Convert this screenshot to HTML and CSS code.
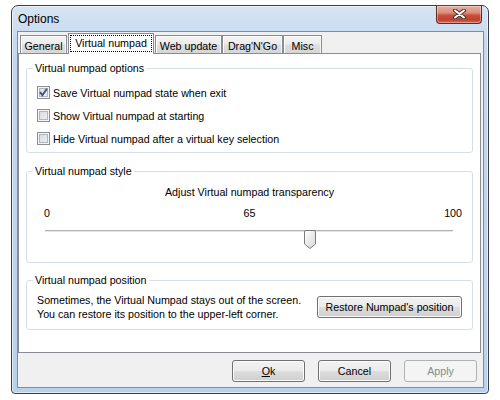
FILE: index.html
```html
<!DOCTYPE html>
<html>
<head>
<meta charset="utf-8">
<link rel="stylesheet" href="styles.css">
</head>
<body>
<div class="window">
  <div class="titlebar">
    <span class="title">Options</span>
    <div class="close">
      <svg width="13" height="10" viewBox="0 0 13 10">
        <path d="M2 1.5 L11 8.5 M11 1.5 L2 8.5" stroke="#3b3b3b" stroke-width="4" stroke-linecap="round"/>
        <path d="M2 1.5 L11 8.5 M11 1.5 L2 8.5" stroke="#ffffff" stroke-width="2" stroke-linecap="round"/>
      </svg>
    </div>
  </div>
  <div class="client">
    <div class="tabs">
      <div class="tab t-general">General</div>
      <div class="tab tab-active t-vn"><span class="focus">Virtual numpad</span></div>
      <div class="tab t-web">Web update</div>
      <div class="tab t-drag">Drag'N'Go</div>
      <div class="tab t-misc">Misc</div>
    </div>
    <div class="page">
      <fieldset class="group g-options">
        <legend>Virtual numpad options</legend>
        <div class="check-row">
          <span class="cb checked">
            <svg width="9" height="9" viewBox="0 0 9 9"><path d="M1 4.2 L3.4 7.2 L8 0.8" fill="none" stroke="#3d5291" stroke-width="1.9"/></svg>
          </span>
          <span>Save Virtual numpad state when exit</span>
        </div>
        <div class="check-row">
          <span class="cb"></span>
          <span>Show Virtual numpad at starting</span>
        </div>
        <div class="check-row">
          <span class="cb"></span>
          <span>Hide Virtual numpad after a virtual key selection</span>
        </div>
      </fieldset>
      <fieldset class="group g-style">
        <legend>Virtual numpad style</legend>
        <div class="slider-title">Adjust Virtual numpad transparency</div>
        <div class="scale">
          <span class="s-min">0</span>
          <span class="s-val">65</span>
          <span class="s-max">100</span>
        </div>
        <div class="slider">
          <div class="track"></div>
          <div class="thumb" style="left: calc(65% - 6px);">
            <svg width="12" height="19" viewBox="0 0 12 19">
              <defs>
                <linearGradient id="tg" x1="0" y1="0" x2="1" y2="1">
                  <stop offset="0" stop-color="#ffffff"/>
                  <stop offset="1" stop-color="#d6d6d6"/>
                </linearGradient>
              </defs>
              <path d="M2 0.5 H10 Q11.5 0.5 11.5 2 V14 L6 18.5 L0.5 14 V2 Q0.5 0.5 2 0.5 Z" fill="url(#tg)" stroke="#7c7c7c"/>
            </svg>
          </div>
        </div>
      </fieldset>
      <fieldset class="group g-pos">
        <legend>Virtual numpad position</legend>
        <div class="pos-row">
          <div class="pos-text">Sometimes, the Virtual Numpad stays out of the screen.<br>You can restore its position to the upper-left corner.</div>
          <button class="btn btn-restore">Restore Numpad's position</button>
        </div>
      </fieldset>
    </div>
    <div class="buttons">
      <button class="btn"><u>O</u>k</button>
      <button class="btn">Cancel</button>
      <button class="btn btn-disabled">Apply</button>
    </div>
  </div>
</div>
</body>
</html>
```
FILE: styles.css
```css
* { box-sizing: border-box; }

body {
  margin: 0;
  background: #ffffff;
  font-family: "Liberation Sans", Arial, sans-serif;
  font-size: 10.7px;
  color: #000;
}

.window {
  margin: 5px 0 0 11px;
  width: 478px;
  height: 389px;
  border: 1px solid #3b4047;
  border-radius: 7px 7px 4px 4px;
  background: linear-gradient(to bottom, #d6e4f3 0px, #c4d8ee 40px, #b9d1ea 100%);
  box-shadow: inset 0 0 0 1px rgba(255,255,255,0.55);
  padding: 0 4px 5px 5px;
  display: flex;
  flex-direction: column;
}

.titlebar {
  height: 25px;
  display: flex;
  align-items: flex-start;
}

.title {
  font-size: 12px;
  line-height: 14px;
  margin: 6px 0 0 1px;
  color: #000;
}

.close {
  margin: -1px 2px 0 auto;
  width: 46px;
  height: 19px;
  border: 1px solid #5b2d25;
  border-top-color: #6a3a32;
  border-radius: 0 0 4px 4px;
  background: linear-gradient(to bottom, #eab0a3 0%, #dc8c7b 40%, #c8503d 55%, #c2402f 80%, #d06a52 100%);
  box-shadow: inset 0 0 0 1px rgba(255,255,255,0.35);
  display: flex;
  align-items: center;
  justify-content: center;
  padding-bottom: 2px;
}

.client {
  flex: 1;
  border: 1px solid #7b8ea6;
  background: #f0f0f0;
  display: flex;
  flex-direction: column;
}

.tabs {
  height: 21px;
  display: flex;
  align-items: flex-end;
  padding-left: 2px;
}

.tab {
  height: 18px;
  border: 1px solid #898c95;
  border-bottom: none;
  background: linear-gradient(to bottom, #f4f4f4 0%, #ececec 45%, #dedede 55%, #d6d6d6 100%);
  box-shadow: inset 1px 1px 0 #ffffff, inset -1px 0 0 #f6f6f6;
  line-height: 14px;
  padding-top: 3px;
  text-align: center;
}

.t-general { width: 47px; margin-right: 1px; }
.t-web { width: 67px; margin-left: 1px; }
.t-drag { width: 61px; }
.t-misc { width: 39px; }

.tab-active {
  width: 86px;
  height: 21px;
  margin-bottom: -1px;
  background: #ffffff;
  box-shadow: none;
  padding: 1px 1px 0;
  position: relative;
  z-index: 1;
}

.focus {
  display: block;
  height: 17px;
  border: 1px dotted #000;
  line-height: 14px;
  padding-top: 0;
}

.page {
  height: 300px;
  margin-right: 2px;
  border: 1px solid #898c95;
  background: #ffffff;
  padding: 0 7px;
  display: flex;
  flex-direction: column;
}

.group {
  margin: 0;
  border: 1px solid #d5dfe5;
  border-radius: 3px;
  padding: 0 10px;
  min-width: 0;
}

.group legend {
  padding: 0 2px;
  margin-left: -4px;
  line-height: 14px;
}

.g-options { margin-top: 7px; padding-top: 6px; padding-bottom: 2px; }
.g-style { margin-top: 11px; padding-top: 7px; padding-bottom: 13px; }
.g-pos { margin-top: 10px; padding-top: 6px; padding-bottom: 8px; }

.check-row {
  height: 23px;
  display: flex;
  align-items: center;
  gap: 3px;
}

.cb {
  width: 13px;
  height: 13px;
  border: 1px solid #8e8f8f;
  background: linear-gradient(135deg, #d4d7dc 0%, #f3f3f4 100%);
  box-shadow: inset 0 0 0 1px #f4f4f4, inset 0 0 0 2px #b3b6ba;
  display: flex;
  align-items: center;
  justify-content: center;
  flex: none;
}

.cb.checked svg { display: block; }

.slider-title {
  line-height: 14px;
  text-align: center;
}

.scale {
  margin-top: 7px;
  line-height: 14px;
  display: grid;
  grid-template-columns: 1fr auto 1fr;
}

.s-min { padding-left: 7px; }
.s-max { text-align: right; }

.slider {
  position: relative;
  height: 19px;
  margin: 10px 9px 0 8px;
}

.track {
  margin-top: 6px;
  height: 2px;
  border-top: 1px solid #b4b4b4;
  border-bottom: 1px solid #e6e6e6;
}

.thumb {
  position: absolute;
  top: 0;
  width: 12px;
  height: 19px;
}

.thumb svg { display: block; }

.pos-row {
  height: 28px;
  display: flex;
  align-items: center;
  justify-content: space-between;
}

.pos-text {
  line-height: 14px;
}

.btn {
  font-family: "Liberation Sans", Arial, sans-serif;
  font-size: 10.7px;
  color: #000;
  height: 22px;
  width: 73px;
  padding: 0;
  border: 1px solid #707070;
  border-radius: 3px;
  background: linear-gradient(to bottom, #f2f2f2 0%, #ebebeb 48%, #dddddd 52%, #cfcfcf 100%);
  box-shadow: inset 0 0 0 1px #fcfcfc;
}

.btn-restore {
  width: 145px;
}

.btn-disabled {
  color: #8b8b8b;
  border-color: #adb2b5;
  background: #f4f4f4;
  box-shadow: none;
}

.buttons {
  margin-top: 7px;
  display: flex;
  justify-content: flex-end;
  gap: 13px;
  padding-right: 6px;
}
```
